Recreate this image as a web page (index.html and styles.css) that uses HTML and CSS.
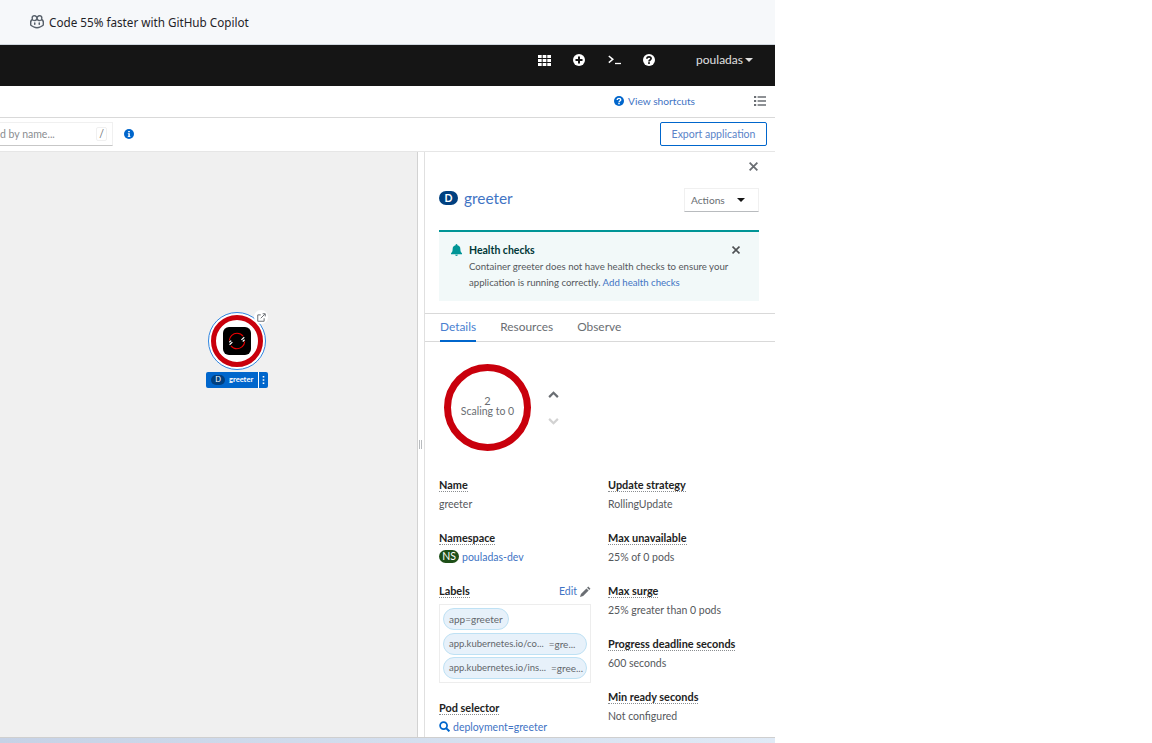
FILE: index.html
```html
<!doctype html>
<html>
    <head>
        <title>Topology - greeter</title>
        <meta charset="utf-8">
        <link rel="stylesheet" href="styles.css">
    </head>
    <body>
        <div class="page">
            <div class="banner">
                <svg class="copilot" viewBox="0 0 16 16" width="16" height="16">
                    <path fill="#57606a" d="M5.2 1C3.6 1 2.6 1.900 2.500 3.400c0 .5 0 1 .2 1.500C1.700 5.600 1 6.600 1 7.600v3.200c0 .6.300 1 .8 1.300C3.300 13.100 5.500 14.500 8 14.500s4.700-1.400 6.200-2.400c.5-.3.8-.7.8-1.300V7.600c0-1-.7-2-1.700-2.700.2-.5.2-1 .2-1.500C13.400 1.900 12.400 1 10.800 1 9.700 1 8.700 1.400 8 2.200 7.300 1.400 6.300 1 5.200 1zM5.300 2.400c.9 0 1.900.5 1.900 1.600 0 1.200-.8 1.900-2.200 1.900-1 0-1.100-.8-1.100-1.800 0-1.200.5-1.700 1.400-1.700zm5.400 0c.9 0 1.400.5 1.400 1.700 0 1-.1 1.800-1.100 1.800-1.400 0-2.200-.7-2.200-1.900 0-1.100 1-1.600 1.900-1.600zM8 6.200c.5.6 1.300 1 2.300 1 .9 0 1.600-.2 2-.6.8.4 1.300 1 1.300 1.500v2.700C12.600 11.700 10.300 13 8 13s-4.600-1.300-5.600-2.200V8.100c0-.5.5-1.100 1.300-1.500.4.400 1.100.6 2 .6 1 0 1.800-.4 2.300-1z"/>
                    <rect fill="#57606a" x="5" y="8.300" width="1.500" height="2.600" rx=".7"/>
                    <rect fill="#57606a" x="9.500" y="8.300" width="1.500" height="2.600" rx=".7"/>
                </svg>
                <span>Code 55% faster with GitHub Copilot</span>
            </div>

            <div class="masthead">
                <svg class="mast-icon" viewBox="0 0 12 10" width="13" height="11">
                    <path fill="#fff" d="M0 0h3.400v2.800H0zM4.300 0h3.400v2.800H4.300zM8.600 0H12v2.800H8.600zM0 3.600h3.400v2.800H0zM4.300 3.600h3.400v2.800H4.300zM8.600 3.600H12v2.800H8.600zM0 7.200h3.400V10H0zM4.300 7.200h3.400V10H4.300zM8.600 7.200H12V10H8.600z"/>
                </svg>
                <svg class="mast-icon" viewBox="0 0 12 12" width="12" height="12">
                    <circle cx="6" cy="6" r="6" fill="#fff"/>
                    <path stroke="#151515" stroke-width="2" d="M6 2.500v7M2.500 6h7"/>
                </svg>
                <svg class="mast-icon" viewBox="0 0 13 10" width="13" height="10">
                    <path fill="none" stroke="#fff" stroke-width="1.500" d="M.8 1l4 3.300-4 3.300"/>
                    <path stroke="#fff" stroke-width="1.300" d="M7 8.500h6"/>
                </svg>
                <svg class="mast-icon mast-help" viewBox="0 0 12 12" width="12" height="12">
                    <circle cx="6" cy="6" r="6" fill="#fff"/>
                    <path fill="none" stroke="#151515" stroke-width="1.700" d="M3.900 4.700C3.900 3.400 4.900 2.800 6 2.800s2.100.6 2.100 1.800c0 1.400-2.100 1.400-2.100 2.900"/>
                    <rect x="5.100" y="8.200" width="1.800" height="1.700" fill="#151515"/>
                </svg>
                <span class="user">pouladas<i class="caret-white"></i></span>
            </div>

            <div class="toolbar">
                <a class="shortcuts" href="#">
                    <svg viewBox="0 0 12 12" width="10" height="10">
                        <circle cx="6" cy="6" r="6" fill="#06c"/>
                        <path fill="none" stroke="#fff" stroke-width="1.700" d="M3.900 4.700C3.900 3.400 4.900 2.800 6 2.800s2.100.6 2.100 1.800c0 1.400-2.100 1.400-2.100 2.900"/>
                        <rect x="5.100" y="8.200" width="1.800" height="1.700" fill="#fff"/>
                    </svg>
                    View shortcuts
                </a>
                <svg viewBox="0 0 12 10" width="12" height="10">
                    <path fill="#6a6e73" d="M0 0h2.200v2H0zM3.600 .3H12v1.400H3.600zM0 4h2.200v2H0zM3.600 4.300H12v1.400H3.600zM0 8h2.200v2H0zM3.600 8.300H12v1.400H3.600z"/>
                </svg>
            </div>

            <div class="filterbar">
                <div class="search">
                    <span class="search-text">d by name...</span>
                    <span class="slash">/</span>
                </div>
                <svg class="info" viewBox="0 0 12 12" width="10" height="10">
                    <circle cx="6" cy="6" r="6" fill="#06c"/>
                    <path fill="#fff" d="M5 2.300h2v1.600H5zM4.600 5h2.400v3.700h.7v1H4.500v-1h.7V6h-.6z"/>
                </svg>
                <button class="export">Export application</button>
            </div>

            <div class="main">
                <div class="canvas">
                    <div class="node">
                        <div class="node-ring"></div>
                        <div class="node-red"></div>
                        <div class="node-logo">
                            <svg viewBox="0 0 20 20" width="22" height="22">
                                <path fill="none" stroke="#e00" stroke-width="1" d="M3 9.500C3.300 5.700 6.300 3 10 3c2.300 0 4.300 1 5.500 2.600M17 10.500c-.3 3.800-3.300 6.500-7 6.500-2.300 0-4.300-1-5.500-2.600"/>
                                <path stroke="#fff" stroke-width="1.100" d="M14 9l2.600-2.400M15.200 10.400l1.700-1.500M3.200 13.400l2.600-2.400M3 11.200l1.700-1.500"/>
                            </svg>
                        </div>
                        <div class="node-link">
                            <svg viewBox="0 0 12 12" width="9" height="9">
                                <path fill="none" stroke="#6a6e73" stroke-width="1.300" d="M9.500 7v4H1V2.500h4M5 7l5.500-5.500M7.500 1h3.500v3.500"/>
                            </svg>
                        </div>
                    </div>
                    <div class="node-label">
                        <span class="node-badge">D</span>
                        <span class="node-name">greeter</span>
                        <span class="node-menu">
                            <svg viewBox="0 0 3 10" width="3" height="8">
                                <path fill="#fff" d="M.5 0h2v2h-2zM.5 4h2v2h-2zM.5 8h2v2h-2z"/>
                            </svg>
                        </span>
                    </div>
                </div>

                <div class="gutter"><span class="grip"></span></div>

                <div class="panel">
                    <div class="panel-close">
                        <svg viewBox="0 0 10 10" width="9" height="9"><path stroke="#6a6e73" stroke-width="2" d="M.7 .7l8.600 8.600M9.300 .7L.7 9.300"/></svg>
                    </div>
                    <div class="panel-head">
                        <div class="title">
                            <span class="badge-d">D</span>
                            <a href="#">greeter</a>
                        </div>
                        <button class="actions">Actions<i class="caret"></i></button>
                    </div>

                    <div class="alert">
                        <div class="alert-title">
                            <svg viewBox="0 0 12 13" width="11" height="12">
                                <path fill="#009596" d="M6 0c.6 0 1 .4 1 1v.4c2 .4 3.200 2 3.200 4 0 2.800.7 3.600 1.800 4.700V11H0v-.9c1.100-1.100 1.800-1.900 1.800-4.700 0-2 1.200-3.600 3.200-4V1c0-.6.4-1 1-1zM4.500 11.700h3C7.500 12.500 6.800 13 6 13s-1.500-.5-1.500-1.300z"/>
                            </svg>
                            <b>Health checks</b>
                            <svg class="alert-close" viewBox="0 0 10 10" width="8" height="8"><path stroke="#4f5255" stroke-width="2" d="M.7 .7l8.600 8.600M9.300 .7L.7 9.300"/></svg>
                        </div>
                        <p>Container greeter does not have health checks to ensure your application is running correctly. <a href="#">Add health checks</a></p>
                    </div>

                    <div class="tabs">
                        <a class="tab active" href="#">Details</a>
                        <a class="tab" href="#">Resources</a>
                        <a class="tab" href="#">Observe</a>
                    </div>

                    <div class="pods">
                        <div class="donut">
                            <span class="donut-num">2</span>
                            <span>Scaling to 0</span>
                        </div>
                        <div class="scale">
                            <svg viewBox="0 0 12 8" width="11" height="7"><path fill="none" stroke="#6a6e73" stroke-width="2.500" d="M1 7l5-5 5 5"/></svg>
                            <svg viewBox="0 0 12 8" width="11" height="7"><path fill="none" stroke="#d2d2d2" stroke-width="2.500" d="M1 1l5 5 5-5"/></svg>
                        </div>
                    </div>

                    <div class="details">
                        <div class="col">
                            <div class="item">
                                <div class="term"><span>Name</span></div>
                                <div class="value">greeter</div>
                            </div>
                            <div class="item">
                                <div class="term"><span>Namespace</span></div>
                                <div class="value"><span class="badge-ns">NS</span> <a href="#">pouladas-dev</a></div>
                            </div>
                            <div class="item">
                                <div class="term term-edit"><span>Labels</span>
                                    <a href="#">Edit
                                        <svg viewBox="0 0 12 12" width="11" height="11"><path fill="#6a6e73" d="M9 .6l2.400 2.400-1.300 1.300-2.400-2.400zM7 2.600L9.400 5l-6 6L0 12l1-3.400z"/></svg>
                                    </a>
                                </div>
                                <div class="labels">
                                    <span class="chip chip-short">app=greeter</span>
                                    <span class="chip"><span class="chip-key">app.kubernetes.io/co...</span><span>=gre...</span></span>
                                    <span class="chip"><span class="chip-key">app.kubernetes.io/ins...</span><span>=gree...</span></span>
                                </div>
                            </div>
                            <div class="item">
                                <div class="term"><span>Pod selector</span></div>
                                <div class="value">
                                    <svg viewBox="0 0 12 12" width="11" height="11"><circle cx="5" cy="5" r="3.800" fill="none" stroke="#06c" stroke-width="1.900"/><path stroke="#06c" stroke-width="2.200" d="M7.800 7.800l3.500 3.500"/></svg>
                                    <a href="#">deployment=greeter</a>
                                </div>
                            </div>
                        </div>
                        <div class="col">
                            <div class="item">
                                <div class="term"><span>Update strategy</span></div>
                                <div class="value">RollingUpdate</div>
                            </div>
                            <div class="item">
                                <div class="term"><span>Max unavailable</span></div>
                                <div class="value">25% of 0 pods</div>
                            </div>
                            <div class="item">
                                <div class="term"><span>Max surge</span></div>
                                <div class="value">25% greater than 0 pods</div>
                            </div>
                            <div class="item">
                                <div class="term"><span>Progress deadline seconds</span></div>
                                <div class="value">600 seconds</div>
                            </div>
                            <div class="item">
                                <div class="term"><span>Min ready seconds</span></div>
                                <div class="value">Not configured</div>
                            </div>
                        </div>
                    </div>
                </div>
            </div>

            <div class="taskbar"></div>
        </div>
    </body>
</html>
```

FILE: styles.css
```css
html, body {
    margin: 0;
    height: 100%;
    background: white;
}

body {
    font: 10.5px/16px Lato, 'Noto Sans', sans-serif;
    color: #55585c;
    overflow: hidden;
}

a {
    color: #3f74c4;
    text-decoration: none;
}

button {
    font: inherit;
    background: white;
    cursor: pointer;
}

.page {
    width: 775px;
    height: 743px;
    display: flex;
    flex-direction: column;
}

.banner {
    flex: 0 0 44px;
    display: flex;
    align-items: center;
    gap: 4px;
    padding-left: 29px;
    background: #f6f8fa;
    border-bottom: 1px solid #d0d7de;
    font: 11.7px 'Noto Sans', sans-serif;
    color: #1f2328;
}

.masthead {
    flex: 0 0 41px;
    display: flex;
    align-items: center;
    background: #151515;
    padding: 0 22px 11px 0;
    box-sizing: border-box;
    color: #e0e0e0;
    justify-content: flex-end;
}

.mast-icon {
    margin-right: 22.5px;
}

.mast-help {
    margin-right: 29px;
}

.user {
    margin-left: 12px;
    font-size: 12px;
    display: flex;
    align-items: center;
    gap: 2px;
}

.caret-white {
    border: 4px solid transparent;
    border-top-color: #e0e0e0;
    border-bottom: 0;
}

.toolbar {
    flex: 0 0 30px;
    display: flex;
    align-items: center;
    justify-content: flex-end;
    gap: 59px;
    padding: 0 9px 1px 0;
    border-bottom: 1px solid #d9d9d9;
}

.shortcuts {
    display: flex;
    align-items: center;
    gap: 4px;
    font-size: 10.2px;
}

.filterbar {
    flex: 0 0 34px;
    box-sizing: border-box;
    display: flex;
    align-items: center;
    border-bottom: 1px solid #e6e6e6;
    padding: 0 8px 2px 0;
}

.search {
    width: 113px;
    height: 24px;
    box-sizing: border-box;
    border-top: 1px solid #f0f0f0;
    border-right: 1px solid #f0f0f0;
    border-bottom: 1px solid #c7c7c7;
    display: flex;
    align-items: center;
    justify-content: space-between;
    padding-right: 5px;
    color: #8a8d90;
    overflow: hidden;
}

.slash {
    width: 9px;
    text-align: center;
    border: 1px solid #f0f0f0;
    border-radius: 2px;
    line-height: 12px;
    color: #6a6e73;
}

.info {
    margin-left: 11px;
}

.export {
    margin-left: auto;
    width: 107px;
    height: 24px;
    padding: 0;
    border: 1px solid #06c;
    border-radius: 2px;
    color: #5a83c8;
}

.main {
    flex: 1;
    min-height: 0;
    display: flex;
}

.canvas {
    position: relative;
    flex: 0 0 417px;
    background: #f0f0f0;
    border-right: 1px solid #d2d2d2;
}

.node {
    position: absolute;
    left: 208px;
    top: 160px;
    width: 58px;
    height: 58px;
}

.node-ring {
    position: absolute;
    inset: 0;
    border: 1px solid #2f85e0;
    border-radius: 50%;
    background: white;
    box-sizing: border-box;
}

.node-red {
    position: absolute;
    inset: 3px;
    border: 5px solid #c9000c;
    border-radius: 50%;
    box-sizing: border-box;
}

.node-logo {
    position: absolute;
    left: 15px;
    top: 15px;
    width: 28px;
    height: 28px;
    background: black;
    border-radius: 6px;
    display: flex;
    align-items: center;
    justify-content: center;
}

.node-link {
    position: absolute;
    left: 46px;
    top: -2px;
    width: 14px;
    height: 14px;
    background: white;
    border-radius: 50%;
    display: flex;
    align-items: center;
    justify-content: center;
}

.node-label {
    position: absolute;
    left: 206px;
    top: 220px;
    width: 62px;
    height: 16px;
    background: #06c;
    border-radius: 2px;
    color: white;
    font-size: 7.5px;
    font-weight: bold;
    line-height: 16px;
    display: flex;
    align-items: center;
}

.node-badge {
    width: 14px;
    height: 10px;
    margin-left: 5px;
    background: #004080;
    border-radius: 5px;
    text-align: center;
    font-weight: normal;
    line-height: 10px;
}

.node-name {
    margin-left: 4px;
    flex: 1;
}

.node-menu {
    width: 10px;
    height: 100%;
    border-left: 1px solid white;
    box-sizing: border-box;
    display: flex;
    align-items: center;
    justify-content: center;
}

.gutter {
    flex: 0 0 5px;
    display: flex;
    align-items: center;
    justify-content: center;
    border-right: 1px solid #e0e0e0;
    padding-right: 1px;
}

.grip {
    width: 1px;
    height: 9px;
    border-left: 1px solid #b8bbbe;
    border-right: 1px solid #b8bbbe;
}

.panel {
    flex: 1;
    min-width: 0;
    position: relative;
    overflow: hidden;
}

.panel-close {
    position: absolute;
    right: 17px;
    top: 7px;
    line-height: 9px;
    padding-top: 3px;
}

.panel-head {
    display: flex;
    justify-content: space-between;
    padding: 36px 16px 0 14px;
    height: 24px;
}

.title {
    display: flex;
    align-items: center;
    gap: 6px;
    height: 22px;
    margin-top: -1px;
    font-size: 15.4px;
}

.badge-d {
    width: 19px;
    height: 14px;
    border-radius: 7px;
    background: #004080;
    color: white;
    font-size: 10.5px;
    font-weight: bold;
    line-height: 14px;
    text-align: center;
}

.actions {
    width: 75px;
    height: 24px;
    padding: 0 13px 0 6px;
    border: 0;
    border-top: 1px solid #f0f0f0;
    border-right: 1px solid #f0f0f0;
    border-bottom: 1px solid #b8bbbe;
    border-left: 1px solid #f0f0f0;
    text-align: left;
    color: #6a6e73;
    font-size: 10.2px;
    display: flex;
    align-items: center;
    justify-content: space-between;
    box-sizing: border-box;
}

.caret {
    border: 4px solid transparent;
    border-top-color: #151515;
    border-bottom: 0;
}

.alert {
    margin: 18px 16px 0 14px;
    height: 71px;
    box-sizing: border-box;
    background: #f2f9f9;
    border-top: 2px solid #009596;
    padding: 10px 12px;
}

.alert-title {
    display: flex;
    align-items: center;
    gap: 7px;
    color: #003737;
}

.alert-close {
    margin-left: auto;
    margin-right: 7px;
}

.alert p {
    margin: 1px 0 0 18px;
    line-height: 15.5px;
    font-size: 9.65px;
}

.tabs {
    margin-top: 12px;
    height: 29px;
    box-sizing: border-box;
    border-top: 1px solid #d9d9d9;
    border-bottom: 1px solid #d9d9d9;
    display: flex;
    gap: 24px;
    padding-left: 15px;
    font-size: 11.9px;
    line-height: 25px;
}

.tab {
    color: #6a6e73;
    height: 28px;
    box-sizing: border-box;
}

.tab.active {
    color: #4a7fd0;
    border-bottom: 2px solid #06c;
}

.pods {
    display: flex;
    align-items: center;
    padding: 22px 0 0 19px;
    gap: 17px;
}

.donut {
    width: 87px;
    height: 87px;
    box-sizing: border-box;
    border: 7px solid #c9000c;
    border-radius: 50%;
    padding-bottom: 3px;
    display: flex;
    flex-direction: column;
    align-items: center;
    justify-content: center;
    line-height: 10px;
    color: #6a6e73;
    font-size: 10.5px;
}

.donut-num {
    font-size: 11px;
}

.scale {
    display: flex;
    flex-direction: column;
    gap: 20px;
}

.details {
    display: flex;
    gap: 17px;
    padding: 27px 0 0 14px;
}

.col {
    width: 152px;
    display: flex;
    flex-direction: column;
    gap: 18px;
}

.item {
    min-height: 35px;
}

.term {
    height: 16px;
    line-height: 14px;
    font-size: 10.9px;
    color: #222;
    font-weight: bold;
    white-space: nowrap;
}

.term span {
    border-bottom: 1px dotted #8a8d90;
    display: inline-block;
    line-height: 13px;
}

.term-edit {
    display: flex;
    justify-content: space-between;
    align-items: flex-start;
    font-weight: normal;
    font-size: 10.5px;
}

.term-edit span {
    font-weight: bold;
    font-size: 10.9px;
}

.term-edit a {
    display: flex;
    align-items: center;
    gap: 3px;
}

.value {
    line-height: 20px;
    display: flex;
    align-items: center;
    gap: 3px;
    height: 19px;
}

.badge-ns {
    width: 20px;
    height: 13px;
    border-radius: 7px;
    background: #1e4f18;
    color: white;
    font-size: 10.5px;
    line-height: 13px;
    text-align: center;
}

.labels {
    margin-top: 4px;
    border: 1px solid #ededed;
    padding: 3px;
    height: 79px;
    box-sizing: border-box;
    display: flex;
    flex-direction: column;
    gap: 2.5px;
}

.chip {
    height: 22px;
    box-sizing: border-box;
    background: #e7f1fa;
    border: 1px solid #bee1f4;
    border-radius: 11px;
    padding: 0 5px;
    line-height: 20px;
    font-size: 10px;
    color: #62666a;
    display: flex;
    gap: 5px;
    white-space: nowrap;
}

.chip-key {
    font-size: 9.5px;
}

.chip-short {
    align-self: flex-start;
}

.taskbar {
    flex: 0 0 6px;
    background: linear-gradient(90deg, #c6d2e6, #e0eaf6);
    border-top: 1px solid #cfcfcf;
    box-sizing: border-box;
}
```
